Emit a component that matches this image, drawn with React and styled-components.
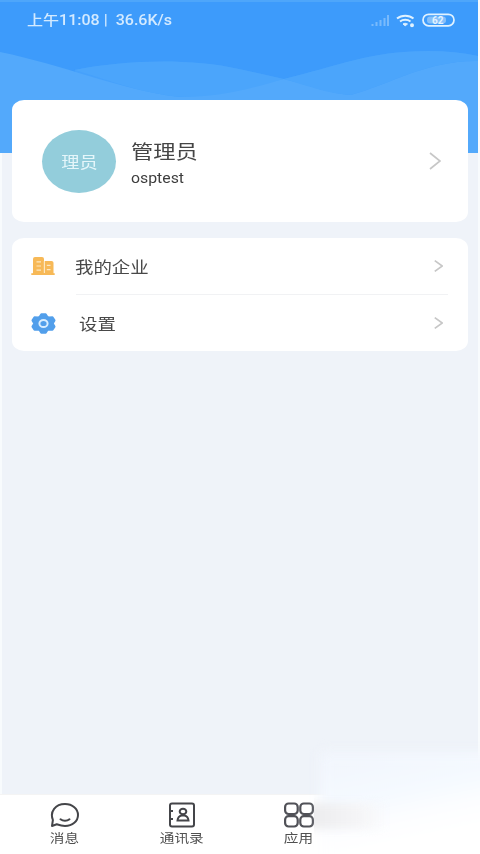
import React from 'react';
import styled, { createGlobalStyle } from 'styled-components';

const GlobalStyle = createGlobalStyle`
  * { box-sizing: border-box; }
  body {
    margin: 0;
    background: #eff4fa;
    font-family: Roboto, "Noto Sans CJK SC", sans-serif;
  }
`;

const Screen = styled.div`
  position: relative;
  display: flex;
  flex-direction: column;
  width: 480px;
  height: 854px;
  overflow: hidden;
  background: linear-gradient(90deg, #f8fbfd 2px, #eff3f9 2px, #eff3f9 478px, #f8fbfd 478px);
`;

const Hero = styled.header`
  position: relative;
  flex: none;
  height: 153px;
  margin-right: 2px;
  background: #3d9bfb;
  border-top: 2px solid #4ea6fa;
`;

const Waves = styled.svg`
  position: absolute;
  left: 0;
  top: -2px;
  width: 100%;
  height: 153px;
`;

const StatusBar = styled.div`
  position: relative;
  display: flex;
  align-items: center;
  justify-content: space-between;
  height: 36px;
  padding: 0 22px 0 27px;
`;

const StatusIcons = styled.svg`
  width: 86px;
  height: 18px;
  overflow: visible;
`;

const Text = styled.span`
  display: inline-block;
  white-space: pre;
  line-height: 1;
  font-size: ${(p) => p.$size}px;
  font-weight: ${(p) => p.$weight || 400};
  color: ${(p) => p.$color || '#484848'};
  transform: scaleX(${(p) => p.$stretch || 1.17});
  transform-origin: ${(p) => p.$origin || 'left'} center;
`;

const Content = styled.main`
  position: relative;
  flex: 1;
  display: flex;
  flex-direction: column;
  gap: 16px;
  margin-top: -53px;
  padding: 0 12px;
`;

const Card = styled.section`
  background: #fff;
  border-radius: 12px / 10px;
`;

const Profile = styled(Card)`
  display: flex;
  align-items: center;
  height: 122px;
  padding: 0 27px 0 30px;
`;

const Avatar = styled.div`
  display: flex;
  align-items: center;
  justify-content: center;
  width: 74px;
  height: 63px;
  padding: 5px 0 0 1px;
  border-radius: 50%;
  background: #93cddb;
`;

const Names = styled.div`
  flex: 1;
  display: flex;
  flex-direction: column;
  align-items: flex-start;
  gap: 9px;
  padding: 6px 0 0 15px;
`;

const Menu = styled(Card)`
  height: 113px;
`;

const MenuRow = styled.div`
  display: flex;
  align-items: center;
  height: 56px;
  padding: 0 25px 0 19px;
`;

const MenuLabel = styled.div`
  flex: 1;
  display: flex;
  padding: 3px 0 0 ${(p) => p.$indent}px;
`;

const Divider = styled.div`
  height: 1px;
  margin: 0 20px 0 64px;
  background: #f1f2f4;
`;

const Icon = styled.svg`
  display: block;
  flex: none;
  width: ${(p) => p.$w}px;
  height: ${(p) => p.$h}px;
`;

const TabBar = styled.nav`
  display: grid;
  grid-template-columns: repeat(4, 117px);
  flex: none;
  height: 60px;
  padding-left: 6px;
  background: #fff;
  border-top: 1px solid #f4f4f4;
`;

const Tab = styled.div`
  display: flex;
  flex-direction: column;
  align-items: center;
  gap: 5px;
  padding-top: 7px;
`;

const Smear = styled.div`
  position: absolute;
  left: 306px;
  top: 803px;
  width: 82px;
  height: 26px;
  background: linear-gradient(90deg, #ebebed 0%, #f1f1f3 40%, #f6f6f8 70%, rgba(255, 255, 255, 0) 100%);
  filter: blur(4px);
  clip-path: inset(-8px -12px -8px 8px);
`;

const CornerHaze = styled.div`
  position: absolute;
  left: 320px;
  top: 752px;
  width: 180px;
  height: 124px;
  background: linear-gradient(168deg, #f2f6fd 8%, #f5faff 36%, #fcfdff 50%, #fff 66%);
  filter: blur(6px);
`;

const Chevron = ({ w, h }) => (
  <Icon $w={w} $h={h} viewBox="0 0 12 18" preserveAspectRatio="none">
    <path d="M1 1l10 8-10 8" fill="none" stroke="#c7c7c7" strokeWidth="1.7" vectorEffect="non-scaling-stroke" />
  </Icon>
);

const BuildingIcon = () => (
  <Icon $w={24} $h={20} viewBox="0 0 24 20">
    <path fill="#f7b957" d="M2 18V3Q2 1 4 1H11Q13 1 13 3V18zM13 18V5H20.500Q22.500 5 22.500 6.800V18z" />
    <path stroke="#f7b957" strokeWidth="1.800" d="M.3 18.100h23.400" />
    <path stroke="#fde7c0" strokeWidth="1.200" d="M5.500 5.800h4.500M5.500 10h4.500M5.500 14.200h4.500M15.800 9.300h3.700M15.800 13.700h3.700M13.400 5v12" />
  </Icon>
);

const GearIcon = () => (
  <Icon $w={25} $h={21} viewBox="0 0 24 21">
    <path
      fill="#529feb"
      stroke="#529feb"
      strokeWidth="2"
      strokeLinejoin="round"
      d="M9.800 1.300h4.400l1.600 2.500 1.700.7 3.500-.2 2 3.100-1.800 3.100 1.800 3.100-2 3.100-3.500-.2-1.700.7-1.600 2.500h-4.400l-1.600-2.500-1.700-.7-3.500.2-2-3.100 1.800-3.100L1 7.400l2-3.100 3.500.2 1.700-.7z"
    />
    <ellipse cx="12" cy="10.500" rx="4.100" ry="3.600" fill="#529feb" stroke="#d8edff" strokeWidth="2" />
  </Icon>
);

const ChatIcon = () => (
  <Icon $w={30} $h={26} viewBox="0 0 30 26" fill="none" stroke="#444549" strokeWidth="2">
    <path strokeLinejoin="round" d="M2 24l.9-6C-.5 9.500 5.500 2 15 2c7.500 0 13 4.700 13 11s-5.500 11-13 11c-3.300 0-6-.9-8.300-1.700z" />
    <path strokeLinecap="round" d="M10.500 17.300c2.500 2 6.500 2 9 0" />
  </Icon>
);

const ContactsIcon = () => (
  <Icon $w={28} $h={26} viewBox="0 0 28 26" fill="none" stroke="#444549" strokeWidth="2">
    <rect x="2" y="1.500" width="24" height="23" rx="2" />
    <path d="M1 9h4M1 17h4" />
    <ellipse cx="15" cy="9.500" rx="3.300" ry="2.800" />
    <path d="M9.500 18.500c.3-3 1.800-4.500 4-5h3c2.200.5 3.700 2 4 5z" />
  </Icon>
);

const AppsIcon = () => (
  <Icon $w={30} $h={26} viewBox="0 0 30 26" fill="none" stroke="#505157" strokeWidth="2.200">
    <rect x="1.100" y="1.500" width="12.600" height="10.500" rx="3.500" />
    <rect x="16.300" y="1.500" width="12.600" height="10.500" rx="3.500" />
    <rect x="1.100" y="14.200" width="12.600" height="10.300" rx="3.500" />
    <rect x="16.300" y="14.200" width="12.600" height="10.300" rx="3.500" />
  </Icon>
);

const BatteryLevel = styled.text`
  font: 700 10px Roboto, sans-serif;
  fill: #e3f3ff;
`;

const tabs = [
  { label: '消息', icon: <ChatIcon /> },
  { label: '通讯录', icon: <ContactsIcon /> },
  { label: '应用', icon: <AppsIcon /> },
];

export default function App() {
  return (
    <>
      <GlobalStyle />
      <Screen>
        <Hero>
          <Waves viewBox="0 0 480 153" preserveAspectRatio="none">
            <path fill="#46a1fb" d="M75 70C125 60 190 58 240 69L285 79C340 66 370 51 430 51Q457 51 480 56V153H75z" />
            <path fill="#53a9fb" d="M0 52C65 65 120 90 180 97C235 93 260 84 285 79C315 87 335 94 352 95C395 83 430 60 480 61V153H0z" />
            <path fill="#4ba5fb" d="M75 70C125 60 190 58 240 69L285 79C245 91 215 97 185 97C145 95 110 80 75 70zM285 79C340 66 370 51 430 51Q457 51 480 56V61C430 60 395 83 352 95C327 93 310 86 285 79z" />
          </Waves>
          <StatusBar>
            <Text $size={14} $color="#d3eaff" $weight={500} $stretch={1.145}>{'上午11:08 |  36.6K/s'}</Text>
            <StatusIcons viewBox="0 0 86 18">
              <path opacity=".4" stroke="#d3eaff" strokeWidth="2" d="M2.500 15v-2M6.500 15v-4M10.500 15V9M14.500 15V7M18 15V4" />
              <g fill="none" stroke="#e0f2ff" strokeWidth="2">
                <path d="M27 7.500C31.500 3.800 39 3.800 43.500 7.500M30 10.500c3-2.200 7.500-2.200 10.500 0" />
                <path d="M33 13c1.500-.9 3-.9 4.500 0l-2.300 1.800z" fill="#e0f2ff" strokeWidth="1" />
                <circle cx="42" cy="14.300" r="1" />
                <rect x="53" y="3.300" width="31" height="11.500" rx="5.700" strokeWidth="1.700" />
              </g>
              <rect x="57" y="5.500" width="19" height="7" rx="3" fill="#86c0fa" />
              <BatteryLevel x="62" y="12.700">62</BatteryLevel>
            </StatusIcons>
          </StatusBar>
        </Hero>

        <Content>
          <Profile>
            <Avatar>
              <Text $size={15.500} $color="#e5f6fa" $origin="center">理员</Text>
            </Avatar>
            <Names>
              <Text $size={19} $color="#454545">管理员</Text>
              <Text $size={14} $color="#3e3e3e" $stretch={1.13}>osptest</Text>
            </Names>
            <Chevron w={12} h={18} />
          </Profile>
          <Menu>
            <MenuRow>
              <BuildingIcon />
              <MenuLabel $indent={20}>
                <Text $size={16} $stretch={1.15}>我的企业</Text>
              </MenuLabel>
              <Chevron w={9} h={12} />
            </MenuRow>
            <Divider />
            <MenuRow>
              <GearIcon />
              <MenuLabel $indent={23}>
                <Text $size={16} $stretch={1.15}>设置</Text>
              </MenuLabel>
              <Chevron w={9} h={12} />
            </MenuRow>
          </Menu>
        </Content>

        <TabBar>
          {tabs.map((tab) => (
            <Tab key={tab.label}>
              {tab.icon}
              <Text $size={12.500} $origin="center" $color="#505050">{tab.label}</Text>
            </Tab>
          ))}
        </TabBar>
        <CornerHaze />
        <Smear />
      </Screen>
    </>
  );
}
